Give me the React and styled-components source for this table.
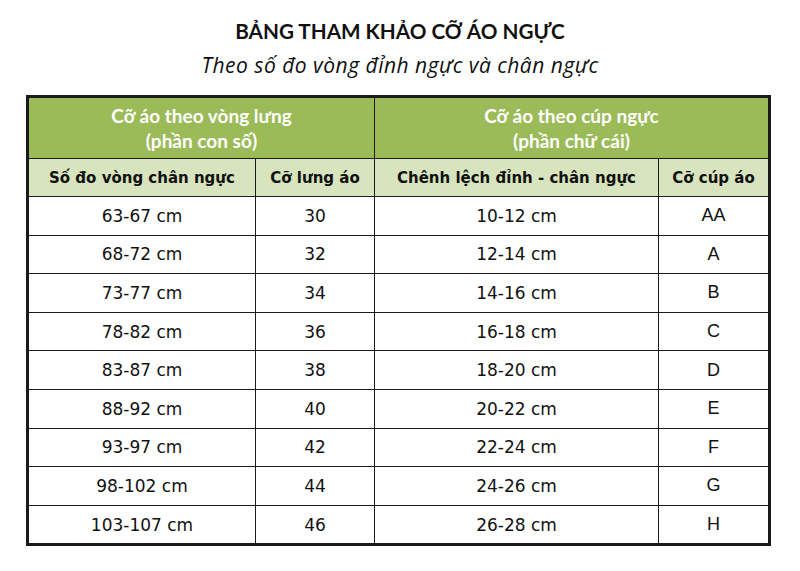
import styled, { createGlobalStyle } from 'styled-components'

const GlobalStyle = createGlobalStyle`
  html, body { margin: 0; padding: 0; background: #fff; }
  body { width: 800px; height: 571px; overflow: hidden; }
`

const Page = styled.div`
  width: 800px;
  height: 571px;
  display: flex;
  flex-direction: column;
  align-items: center;
  padding-top: 18px;
  box-sizing: border-box;
  font-family: 'Lato', 'Open Sans', sans-serif;
  color: #111;
`

const Title = styled.h1`
  margin: 0;
  font-size: 20.7px;
  font-weight: 700;
  line-height: 26px;
`

const Subtitle = styled.h2`
  margin: 8px 0 0;
  font-family: 'Open Sans', 'Lato', sans-serif;
  font-size: 21px;
  font-weight: 400;
  font-style: italic;
  letter-spacing: 0.5px;
  line-height: 26px;
`

const Table = styled.table`
  margin-top: 17px;
  margin-left: -3px;
  border-collapse: collapse;
  border: 3px solid #1a1a1a;
  table-layout: fixed;
  width: 742px;
`

const GroupHead = styled.th`
  background: #9bbb59;
  color: #fff;
  font-family: 'Lato', 'Open Sans', sans-serif;
  font-weight: 700;
  font-size: 19px;
  line-height: 25px;
  height: 60px;
  padding: 0;
  text-align: center;
  border: 1.5px solid #1a1a1a;
`

const ColHead = styled.th`
  background: #d7e4bd;
  font-family: 'DejaVu Sans', Verdana, sans-serif;
  font-weight: 700;
  font-size: 15px;
  height: 37px;
  padding: 0;
  text-align: center;
  border: 1.5px solid #1a1a1a;
  color: #111;
`

const Cell = styled.td`
  font-family: ${p => (p.$arial ? "'Liberation Sans', Arial" : "'DejaVu Sans', Verdana")}, sans-serif;
  font-size: ${p => (p.$arial ? '18px' : '17px')};
  height: 37.6px;
  padding: 0;
  text-align: center;
  border: 1.5px solid #1a1a1a;
  color: #111;
`

const rows = [
  ['63-67 cm', '30', '10-12 cm', 'AA'],
  ['68-72 cm', '32', '12-14 cm', 'A'],
  ['73-77 cm', '34', '14-16 cm', 'B'],
  ['78-82 cm', '36', '16-18 cm', 'C'],
  ['83-87 cm', '38', '18-20 cm', 'D'],
  ['88-92 cm', '40', '20-22 cm', 'E'],
  ['93-97 cm', '42', '22-24 cm', 'F'],
  ['98-102 cm', '44', '24-26 cm', 'G'],
  ['103-107 cm', '46', '26-28 cm', 'H'],
]

export default function App() {
  return (
    <>
      <GlobalStyle />
      <Page>
        <Title>BẢNG THAM KHẢO CỠ ÁO NGỰC</Title>
        <Subtitle>Theo số đo vòng đỉnh ngực và chân ngực</Subtitle>
        <Table>
          <colgroup>
            <col style={{ width: 228 }} />
            <col style={{ width: 119 }} />
            <col style={{ width: 284 }} />
            <col style={{ width: 111 }} />
          </colgroup>
          <thead>
            <tr>
              <GroupHead colSpan={2}>Cỡ áo theo vòng lưng<br />(phần con số)</GroupHead>
              <GroupHead colSpan={2}>Cỡ áo theo cúp ngực<br />(phần chữ cái)</GroupHead>
            </tr>
            <tr>
              <ColHead>Số đo vòng chân ngực</ColHead>
              <ColHead>Cỡ lưng áo</ColHead>
              <ColHead>Chênh lệch đỉnh - chân ngực</ColHead>
              <ColHead>Cỡ cúp áo</ColHead>
            </tr>
          </thead>
          <tbody>
            {rows.map(r => (
              <tr key={r[0]}>
                <Cell>{r[0]}</Cell>
                <Cell>{r[1]}</Cell>
                <Cell>{r[2]}</Cell>
                <Cell $arial>{r[3]}</Cell>
              </tr>
            ))}
          </tbody>
        </Table>
      </Page>
    </>
  )
}
